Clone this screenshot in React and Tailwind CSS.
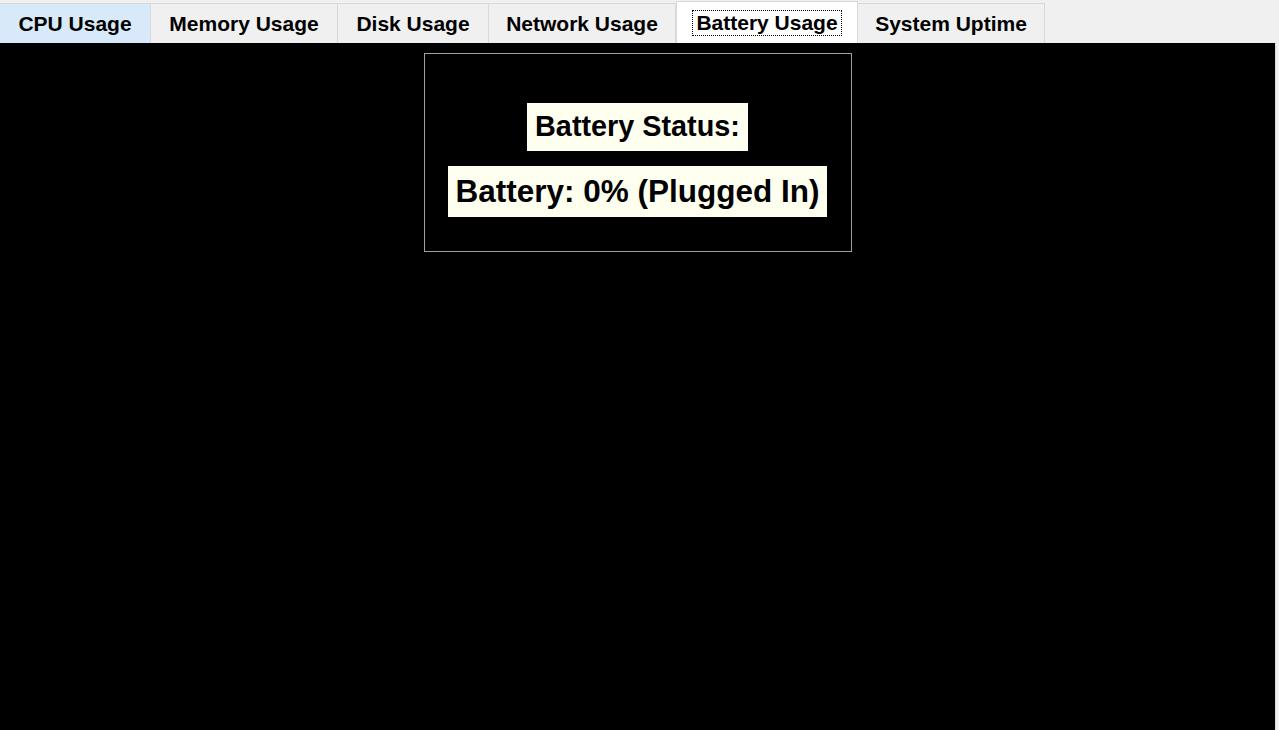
import React, { useState } from "react";

const tabs = [
  { id: "cpu", label: "CPU Usage", w: "w-[151px]" },
  { id: "memory", label: "Memory Usage", w: "w-[187px]" },
  { id: "disk", label: "Disk Usage", w: "w-[151px]" },
  { id: "network", label: "Network Usage", w: "w-[187px]" },
  { id: "battery", label: "Battery Usage", w: "w-[182px]" },
  { id: "uptime", label: "System Uptime", w: "w-[187px]" },
];

export default function App() {
  const [active, setActive] = useState("battery");

  return (
    <div className="w-[1279px] h-[730px] bg-[#f0f0f0] flex flex-col font-['Liberation_Sans',Arial,sans-serif] text-black overflow-hidden">
      <div className="h-[43px] flex items-end">
        {tabs.map((t, i) => {
          const selected = t.id === active;
          if (selected) {
            return (
              <button
                key={t.id}
                type="button"
                onClick={() => setActive(t.id)}
                className={`${t.w} h-[42px] bg-white border border-b-0 border-[#d9d9d9] flex justify-center pt-[8px] text-[21px] font-bold`}
              >
                <span className="border border-dotted border-black px-[3px] h-[26px] leading-[24px]">
                  {t.label}
                </span>
              </button>
            );
          }
          return (
            <button
              key={t.id}
              type="button"
              onClick={() => setActive(t.id)}
              className={`${t.w} h-[40px] border-t border-r border-[#d9d9d9] flex items-center justify-center pt-[1px] text-[21px] font-bold ${
                i === 0 ? "bg-[#d8eaf9]" : "bg-[#f0f0f0]"
              }`}
            >
              {t.label}
            </button>
          );
        })}
      </div>

      <div className="flex-1 bg-black mr-[3px] border-r border-[#d9d9d9] flex justify-center pt-[10px]">
        <div className="w-[428px] h-[199px] border border-[#a0a0a0] flex flex-col items-center pt-[49px]">
          <div className="bg-[#fffff0] h-[48px] px-[8px] flex items-center text-[28.8px] font-bold">
            Battery Status:
          </div>
          <div className="bg-[#fffff0] h-[51px] mt-[15px] px-[7px] flex items-center text-[31.5px] font-bold">
            Battery: 0% (Plugged In)
          </div>
        </div>
      </div>
    </div>
  );
}
